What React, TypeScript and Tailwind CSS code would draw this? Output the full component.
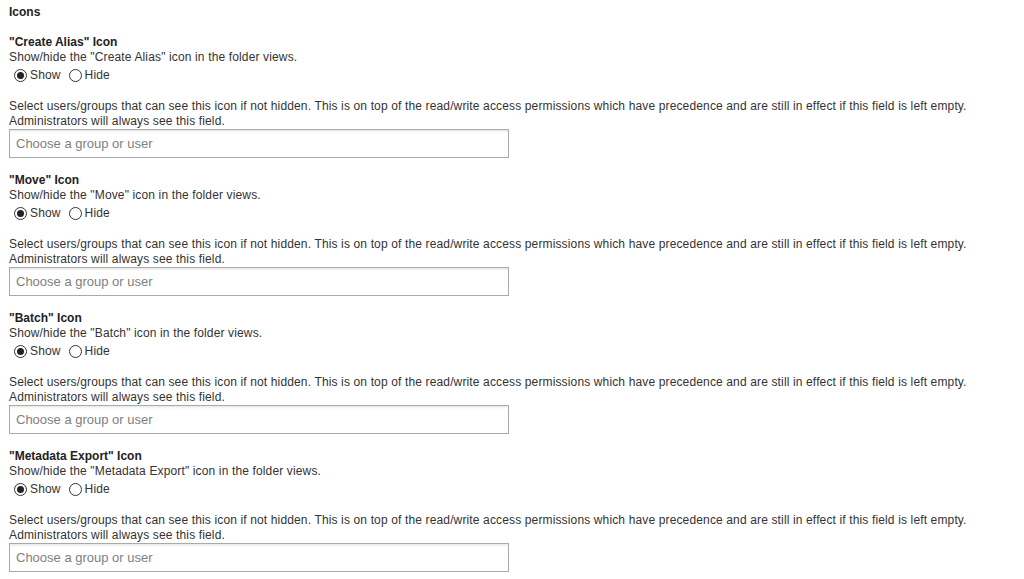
// Folder view icon settings: show/hide toggles plus a user/group picker per icon.

const ICONS = ["Create Alias", "Move", "Batch", "Metadata Export"];

function Radio({ checked, label }: { checked: boolean; label: string }) {
  return (
    <label className="flex items-center">
      <span className="flex h-[13px] w-[13px] items-center justify-center rounded-full border border-[#333] bg-white">
        {checked && <span className="h-[7px] w-[7px] rounded-full bg-[#222]" />}
      </span>
      <span className="ml-[3px]">{label}</span>
    </label>
  );
}

function IconSection({ name }: { name: string }) {
  return (
    <div className="mb-[15px]">
      <div className="font-bold tracking-normal text-[#222]">"{name}" Icon</div>
      <div>Show/hide the "{name}" icon in the folder views.</div>
      <div className="flex h-[20px] items-center gap-[8px] pl-[5px]">
        <Radio checked label="Show" />
        <Radio checked={false} label="Hide" />
      </div>
      <div className="mt-[14px]">
        Select users/groups that can see this icon if not hidden. This is on top of the read/write access
        permissions which have precedence and are still in effect if this field is left empty.
        <br />
        Administrators will always see this field.
      </div>
      <input
        type="text"
        placeholder="Choose a group or user"
        className="block h-[29px] w-[500px] border border-[#aaa] bg-white px-[6px] text-[13px] tracking-normal shadow-[inset_0_3px_3px_-2px_rgba(0,0,0,0.12)] outline-none placeholder:text-[#808080]"
      />
    </div>
  );
}

export default function App() {
  return (
    <div className="min-h-screen bg-white pl-[9px] pt-[5px] font-['Liberation_Sans',Arial,sans-serif] text-[12px] leading-[15px] tracking-[0.14px] text-[#333]">
      <div className="mb-[15px] font-bold tracking-normal text-[#222]">Icons</div>
      {ICONS.map((name) => (
        <IconSection key={name} name={name} />
      ))}
    </div>
  );
}
